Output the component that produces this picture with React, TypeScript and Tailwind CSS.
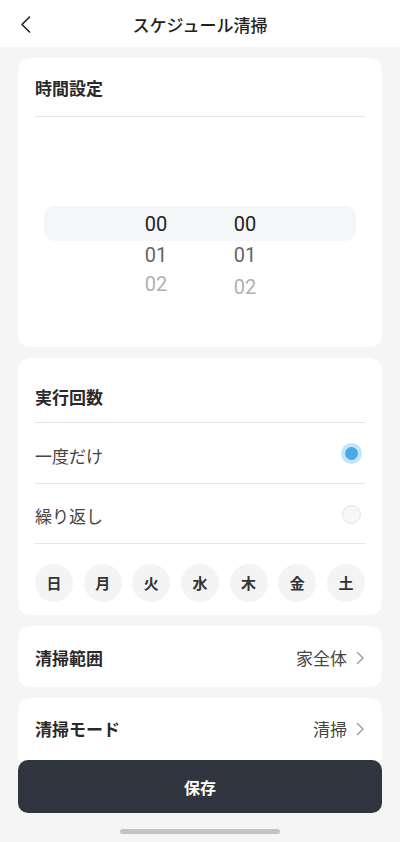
import React from "react";

const font = { fontFamily: '"Noto Sans CJK JP", "Noto Sans", sans-serif' };
const numFont = { fontFamily: 'Roboto, "Noto Sans", sans-serif' };

function Chevron() {
  return (
    <svg width="9" height="14" viewBox="0 0 9 14" fill="none">
      <path d="M1.5 1.5 L7 7 L1.5 12.5" stroke="#9a9a9a" strokeWidth="1.4" strokeLinecap="round" strokeLinejoin="round" />
    </svg>
  );
}

export default function App() {
  const days = ["日", "月", "火", "水", "木", "金", "土"];
  return (
    <div className="w-[400px] h-[842px] bg-[#f5f5f5] flex flex-col overflow-hidden" style={font}>
      {/* Header */}
      <div className="h-[47px] bg-white flex items-center relative shrink-0">
        <div className="absolute left-[20px] top-[16px]">
          <svg width="12" height="17" viewBox="0 0 12 17" fill="none">
            <path d="M9.5 1 L2 8.5 L9.5 16" stroke="#222" strokeWidth="1.6" strokeLinecap="round" strokeLinejoin="round" />
          </svg>
        </div>
        <div className="w-full text-center text-[17px] font-medium text-[#222] leading-[22px] pt-[2px]">スケジュール清掃</div>
      </div>

      {/* Content */}
      <div className="flex-1 overflow-hidden px-[18px] pt-[11px] flex flex-col gap-[11px]">
        {/* Card 1 */}
        <div className="bg-white rounded-[12px] h-[289px] shrink-0 px-[17px] flex flex-col">
          <div className="pt-[19px] h-[41px] text-[17px] font-bold text-[#2a2a2a] leading-[22px]">時間設定</div>
          <div className="mt-[17px] h-px bg-[#e6e6e6]" />
          <div className="mt-[89px] mx-[9px] h-[35px] bg-[#f5f6f7] rounded-[10px] flex items-center text-[20px] text-[#222]" style={numFont}>
            <div className="ml-[82px] w-[60px] text-center">00</div>
            <div className="ml-[29px] w-[60px] text-center">00</div>
          </div>
          <div className="mx-[9px] h-[26px] flex items-center text-[20px] text-[#666]" style={numFont}>
            <div className="ml-[82px] w-[60px] text-center pt-[1px]">01</div>
            <div className="ml-[29px] w-[60px] text-center pt-[2px]">01</div>
          </div>
          <div className="mx-[9px] h-[34px] flex items-center text-[20px] text-[#b0b0b0]" style={numFont}>
            <div className="ml-[82px] w-[60px] text-center">02</div>
            <div className="ml-[29px] w-[60px] text-center pt-[5px]">02</div>
          </div>
        </div>

        {/* Card 2 */}
        <div className="bg-white rounded-[12px] h-[257px] shrink-0 px-[17px] flex flex-col">
          <div className="pt-[28px] h-[50px] text-[17px] font-bold text-[#2a2a2a] leading-[22px]">実行回数</div>
          <div className="mt-[14px] h-px bg-[#e6e6e6]" />
          <div className="h-[60px] flex items-center justify-between">
            <span className="text-[17px] text-[#444] pt-[5px]">一度だけ</span>
            <span className="w-[21px] h-[21px] rounded-full bg-[#c4e4f7] flex items-center justify-center mr-[3px]">
              <span className="w-[13px] h-[13px] rounded-full bg-[#4aa9e2]" />
            </span>
          </div>
          <div className="h-px bg-[#e6e6e6]" />
          <div className="h-[59px] flex items-center justify-between">
            <span className="text-[17px] text-[#444] pt-[5px]">繰り返し</span>
            <span className="w-[19px] h-[19px] rounded-full bg-[#f6f7f9] border border-[#e4e6ea] mr-[4px] mt-[2px]" />
          </div>
          <div className="h-px bg-[#e6e6e6]" />
          <div className="pt-[20px] flex justify-between">
            {days.map((d) => (
              <div key={d} className="w-[38px] h-[38px] rounded-full bg-[#f4f4f4] flex items-center justify-center text-[15px] font-bold text-[#333]">
                {d}
              </div>
            ))}
          </div>
        </div>

        {/* Card 3 */}
        <div className="bg-white rounded-[12px] h-[61px] shrink-0 px-[17px] flex items-center justify-between">
          <span className="text-[17px] font-bold text-[#2a2a2a] pt-[3px]">清掃範囲</span>
          <span className="flex items-center gap-[9px] text-[17px] text-[#444] pt-[3px]">
            家全体
            <Chevron />
          </span>
        </div>

        {/* Card 4 */}
        <div className="bg-white rounded-t-[12px] h-[70px] shrink-0 px-[17px] flex items-start justify-between pt-[19px]">
          <span className="text-[17px] font-bold text-[#2a2a2a] leading-[24px]">清掃モード</span>
          <span className="flex items-center gap-[9px] text-[17px] text-[#444] leading-[24px]">
            清掃
            <Chevron />
          </span>
        </div>
      </div>

      {/* Bottom */}
      <div className="h-[82px] shrink-0 px-[18px] flex flex-col">
        <div className="h-[53px] bg-[#313540] rounded-[10px] flex items-center justify-center text-white text-[16px] font-bold">
          保存
        </div>
        <div className="mt-[16px] mx-auto w-[160px] h-[5px] rounded-full bg-[#c4c4c4]" />
      </div>
    </div>
  );
}
